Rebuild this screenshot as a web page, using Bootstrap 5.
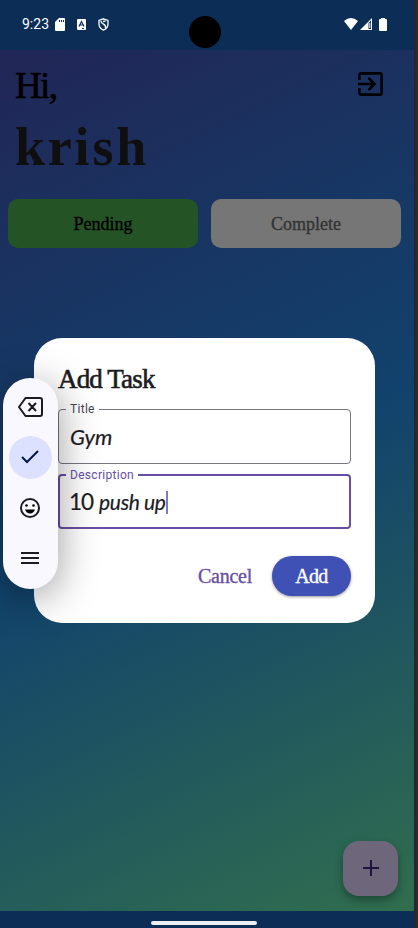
<!DOCTYPE html>
<html lang="en">
<head>
<meta charset="utf-8">
<meta name="viewport" content="width=device-width, initial-scale=1">
<title>Tasks</title>
<link href="https://cdn.jsdelivr.net/npm/bootstrap@5.3.0/dist/css/bootstrap.min.css" rel="stylesheet">
<style>
html,body{height:928px;overflow:hidden}
body{background:#2b2b2e;font-family:Roboto,sans-serif}
svg{display:block;flex:none}
.phone{width:414px;height:928px;background:#0b2d56;box-shadow:0 0 2px #151c28}
.status{height:50px;padding:0 27px 2px 22px;color:#fff;font-size:14px}
.camera{left:189px;top:16px;width:32px;height:32px;background:#000}
.screen{height:861px;background:linear-gradient(154.3deg,#212656 0%,#11426d 50%,#306e4e 100%)}
.serif{font-family:"Liberation Serif",serif;-webkit-text-stroke:.35px currentColor}
.hello{height:70px;padding:0 31px 2px 15px;color:#000}
.hi{font-size:37px;letter-spacing:-1.6px;line-height:66px;padding-top:3px;-webkit-text-stroke:.6px #000}
.who{font-size:54px;font-weight:700;letter-spacing:2.8px;line-height:54px;color:#0f0f0f;padding-left:15px;height:79px;-webkit-text-stroke:0}
.tabs{padding:0 13px 0 8px;gap:13px}
.tabs .btn{height:49px;border-radius:10px;font-size:18px;border:0;padding:2px 0 0}
.pending,.pending:hover{background:#245426;color:#000}
.complete,.complete:hover{background:#767676;color:#333}
.sheet{left:34px;top:338px;width:341px;height:285px;border-radius:28px;padding:25px 24px 24px}
.sheet{background:#fff}
.sheet h1{font-size:27px;line-height:33px;margin:0 0 5px;letter-spacing:-.85px;color:#1c1b1f;-webkit-text-stroke:.6px currentColor}
.field{border:1px solid #79767e;border-radius:4px;height:63px;margin:0 0 3px;padding:0 0 0 10px}
.field legend{font-size:12px;line-height:16px;height:16px;padding:0 4px;margin:0 0 0 -3px;letter-spacing:.3px;color:#49454f}
.field.active{border:2px solid #6750a4;height:62px;padding-left:9px}
.field.active legend{color:#6750a4}
.hand{font-family:Lato,sans-serif;font-style:italic;font-size:22px;line-height:40px;color:#1c1b1f;padding-left:1px;-webkit-text-stroke:.2px currentColor}
.active .hand{height:38px;padding-left:0}
.words{font-size:21px;letter-spacing:-.35px;padding-left:6px}
.num{font-style:normal;font-size:22.5px;letter-spacing:-1px;font-family:Lato,sans-serif}
.caret{width:2px;height:23px;background:#8577bd}
.actions{margin-top:27px;gap:20px}
.actions .btn{font-size:20px;border:0;padding:0}
.actions .cancel{color:#6750a4;letter-spacing:-.25px}
.actions .add{width:79px;height:40px;background:#3f51b5;color:#fff;letter-spacing:-.7px;box-shadow:0 1px 3px #0006}
.tools{left:3px;top:378px;width:55px;height:211px;border-radius:28px;background:#faf8ff;box-shadow:0 8px 42px #0006;padding:7px 1px 9px 0}
.tool{width:43px;height:43px}
.check{background:#dbe1ff}
.fab{left:343px;top:841px;width:55px;height:55px;border-radius:16px;background:#6e667a;box-shadow:0 4px 8px #0005}
.fab svg{margin-top:-2px}
.homebar{height:17px;padding:10px 6px 0 0}
.homebar span{width:106px;height:4px;background:#ebeef3}
</style>
</head>
<body>
<main class="phone position-relative">
  <header class="status d-flex align-items-center">
    <span>9:23</span>
    <svg style="margin-left:6px" width="10" height="13" viewBox="0 0 10 13"><path fill="#fff" d="M4 0h5q1 0 1 1v11q0 1-1 1H1q-1 0-1-1V4z"/><path stroke="#0b2d56" d="M4.5 2v2m2-2v2m2-2v2"/></svg>
    <svg style="margin-left:12px" width="9" height="11" viewBox="0 0 9 11"><rect width="9" height="11" rx="1" fill="#fff"/><path d="M2 7.500l2.500-5 2.500 5M3 6h3M5 9.500h2" stroke="#0b2d56" stroke-width="1.200" fill="none"/></svg>
    <svg style="margin-left:12px" width="11" height="13" viewBox="0 0 11 13"><path d="M5.500.8L10 2.400v3.500c0 3-2 5-4.500 6.200C3 10.900 1 8.900 1 5.900V2.400zM3 3q0 2 2.500 3.200T7.500 10M7.500 3.200L5 3.500" stroke="#fff" stroke-width="1.300" fill="none"/></svg>
    <svg class="ms-auto" width="14" height="12" viewBox="0 0 14 12"><path fill="#fff" d="M0 3q7-6 14 0L7 12z"/></svg>
    <svg style="margin-left:2px" width="12" height="12" viewBox="0 0 12 12"><path fill="#fff" d="M0 12L12 0v12z"/><path fill="#0b2d56" d="M8.500 5L11 2.500V11H8.500z"/><path fill="#fff" d="M9.300 5h1v5h-1z"/></svg>
    <svg style="margin-left:7px" width="8" height="13" viewBox="0 0 8 13"><path fill="#fff" d="M2 0h4v1h1q1 0 1 1v10q0 1-1 1H1q-1 0-1-1V2q0-1 1-1h1z"/></svg>
  </header>
  <div class="camera rounded-circle position-absolute"></div>
  <section class="screen">
    <div class="hello d-flex align-items-center justify-content-between">
      <span class="hi serif">Hi,</span>
      <svg width="25" height="24" viewBox="0 0 25 24" fill="none" stroke="#000" stroke-width="2.600"><path d="M1.400 8V3q0-1.600 1.600-1.600h19q1.600 0 1.600 1.600v18q0 1.600-1.600 1.600H3q-1.600 0-1.600-1.600v-5M0 12h16M10.500 6l6 6-6 6"/></svg>
    </div>
    <div class="who serif">krish</div>
    <div class="tabs d-flex">
      <button class="btn serif pending flex-fill w-50">Pending</button>
      <button class="btn serif complete flex-fill w-50">Complete</button>
    </div>
  </section>
  <footer class="homebar d-flex justify-content-center"><span class="rounded-pill"></span></footer>
  <button class="fab btn border-0 p-0 position-absolute d-flex align-items-center justify-content-center" aria-label="New task">
    <svg width="16" height="16" viewBox="0 0 16 16"><path d="M0 8h16M8 0v16" stroke="#21133f" stroke-width="2"/></svg>
  </button>
  <section class="sheet position-absolute">
    <h1 class="serif">Add Task</h1>
    <fieldset class="field"><legend class="w-auto float-none">Title</legend><div class="hand">Gym</div></fieldset>
    <fieldset class="field active"><legend class="w-auto float-none">Description</legend><div class="hand d-flex align-items-center"><span class="num">10</span><span class="words">push up</span><span class="caret"></span></div></fieldset>
    <div class="actions d-flex justify-content-end align-items-center">
      <button class="btn serif cancel">Cancel</button>
      <button class="btn serif add rounded-pill">Add</button>
    </div>
  </section>
  <aside class="tools position-absolute d-flex flex-column align-items-center justify-content-between">
    <span class="tool d-flex align-items-center justify-content-center"><svg width="25" height="20" viewBox="0 0 25 20" fill="none" stroke="#1b1b20" stroke-width="2" stroke-linejoin="round"><path d="M7.500 1H22q2 0 2 2v14q0 2-2 2H7.500L1 10zM10.500 6l7.500 8m0-8l-7.500 8"/></svg></span>
    <span class="tool check rounded-circle d-flex align-items-center justify-content-center"><svg width="18" height="14" viewBox="0 0 18 14"><path d="M1 7l5 5L17 1" fill="none" stroke="#00174b" stroke-width="2"/></svg></span>
    <span class="tool d-flex align-items-center justify-content-center"><svg width="20" height="20" viewBox="0 0 20 20"><circle cx="10" cy="10" r="9" fill="none" stroke="#1b1b20" stroke-width="2"/><circle cx="6.500" cy="7.500" r="1.300"/><circle cx="13.500" cy="7.500" r="1.300"/><path d="M5 11.500h10q-1.500 4-5 4t-5-4"/></svg></span>
    <span class="tool d-flex align-items-center justify-content-center"><svg width="18" height="12" viewBox="0 0 18 12"><path d="M0 1h18M0 6h18M0 11h18" stroke="#1b1b20" stroke-width="1.800"/></svg></span>
  </aside>
</main>
<script src="https://cdn.jsdelivr.net/npm/bootstrap@5.3.0/dist/js/bootstrap.bundle.min.js"></script>
</body>
</html>
